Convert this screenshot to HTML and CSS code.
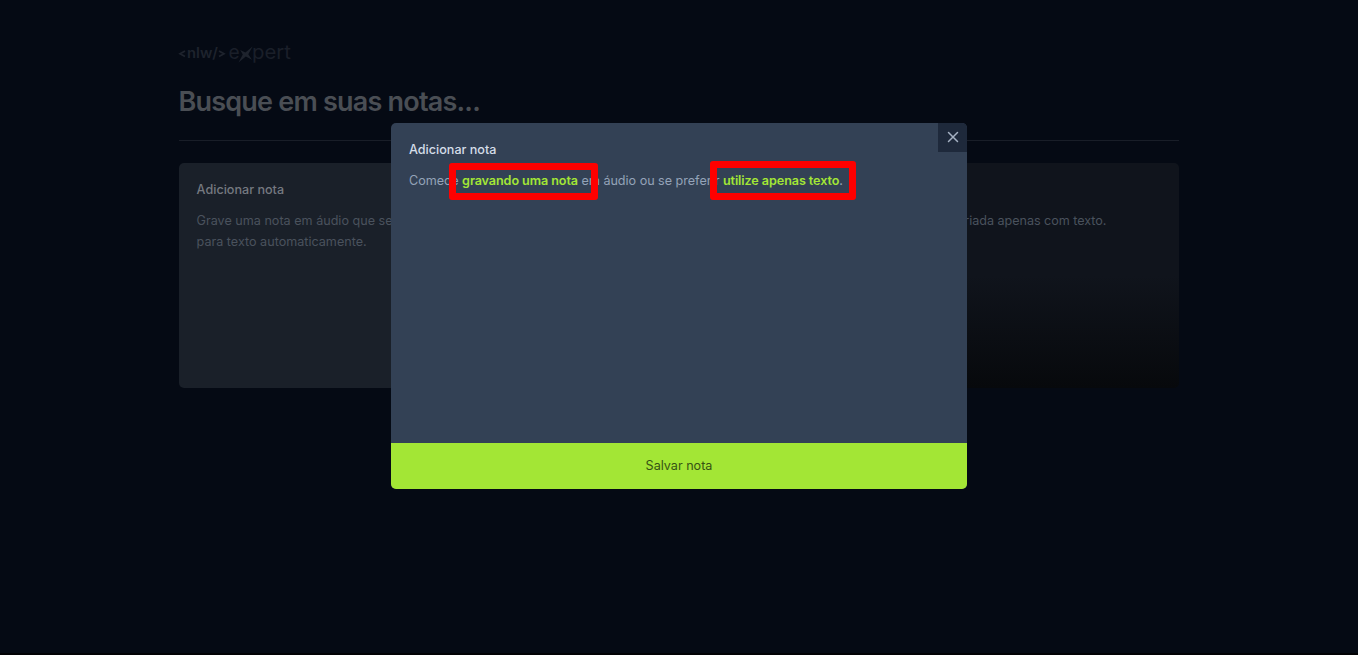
FILE: index.html
```html
<!DOCTYPE html>
<html lang="pt-BR">
<head>
<meta charset="utf-8">
<title>NLW Expert Notes</title>
<link rel="stylesheet" href="styles.css">
</head>
<body>
<main class="page">
  <svg class="logo" viewBox="0 0 114 24" width="114" height="24" aria-label="nlw expert">
    <g class="logo-tag">
      <path d="M6 9 1 11.8l5 2.8M40 9l5 2.8-5 2.8" class="logo-chevron"/>
      <text x="8" y="15.6" textLength="31" lengthAdjust="spacingAndGlyphs">nlw/</text>
    </g>
    <g class="logo-word">
      <text x="49.6" y="17.4" textLength="11.2" lengthAdjust="spacingAndGlyphs">e</text>
      <path class="logo-star" d="M61.2 8 66.4 10.6 73.6 4.5 69.3 12.2 73 17.8 66.8 14.4 59.5 20.4 63.8 12.6Z"/>
      <text x="73" y="17.4" textLength="39" lengthAdjust="spacingAndGlyphs">pert</text>
    </g>
  </svg>
  <h1 class="search">Busque em suas notas...</h1>
  <div class="divider"></div>
  <section class="grid">
    <article class="card card-new">
      <h2 class="card-title">Adicionar nota</h2>
      <p class="card-text">Grave uma nota em áudio que será convertida para texto automaticamente.</p>
    </article>
    <article class="card"></article>
    <article class="card">
      <h2 class="card-title">há 2 dias</h2>
      <p class="card-text card-text-tight">Essa nota foi criada apenas com texto.</p>
    </article>
  </section>
</main>
<div class="bottom-edge"></div>
<div class="dialog" role="dialog">
  <button class="close" aria-label="Fechar"><svg viewBox="0 0 24 24" width="18" height="18"><path d="M18 6 6 18M6 6l12 12"/></svg></button>
  <div class="dialog-body">
    <h2 class="dialog-title">Adicionar nota</h2>
    <p class="dialog-text">Comece <span class="link">gravando uma nota</span> em áudio ou se preferir <span class="link">utilize apenas texto</span>.</p>
  </div>
  <button class="save">Salvar nota</button>
</div>
<div class="marker marker-record"></div>
<div class="marker marker-text"></div>
</body>
</html>
```
FILE: styles.css
```css
* { box-sizing: border-box; margin: 0; }
body {
  height: 655px;
  overflow: hidden;
  background: #050a14;
  font-family: Inter, "Liberation Sans", sans-serif;
  font-size: 12.6px;
}
.page { width: 1000px; margin: 0 auto; padding-top: 42px; }
.logo { display: block; overflow: visible; }
.logo-tag text { font: 600 14.5px Inter, sans-serif; fill: #1e232d; }
.logo-word text { font: 400 19px Inter, sans-serif; fill: #1a1f29; }
.logo-chevron { fill: none; stroke: #1e232d; stroke-width: 1.7; }
.logo-star { fill: #1e232d; }
.search {
  margin-top: 18px;
  margin-left: -0.5px;
  font-size: 27px;
  font-weight: 600;
  line-height: 36px;
  letter-spacing: -0.79px;
  color: #4a4e54;
}
.divider { height: 1px; margin: 20px 0 22px; background: #191e28; }
.grid { display: grid; grid-template-columns: repeat(3, 1fr); gap: 21.6px; }
.card {
  height: 225px;
  padding: 18px;
  border-radius: 5px;
  background: linear-gradient(#10141c 50%, #07090c);
}
.card-new { padding-left: 17.6px; background: #1a2029; }
.card-title { font-size: 12.6px; font-weight: 500; line-height: 18px; color: #757980; }
.card-text { margin-top: 10.8px; line-height: 21.6px; color: #4a525d; }
.card-text-tight { letter-spacing: -0.04px; }
.bottom-edge { position: absolute; left: 0; right: 0; bottom: 0; height: 2px; background: #020204; }
.dialog {
  position: absolute;
  left: 391px;
  top: 123px;
  width: 576px;
  height: 366px;
  display: flex;
  flex-direction: column;
  overflow: hidden;
  border-radius: 5px;
  background: #334155;
}
.dialog-body { flex: 1; padding: 18px; }
.dialog-title { font-size: 12.6px; font-weight: 500; line-height: 18px; color: #d5dde8; }
.dialog-text { margin-top: 10.8px; line-height: 21.6px; letter-spacing: -0.02px; color: #94a3b8; }
.link { font-weight: 600; letter-spacing: -0.08px; color: #a3e635; }
.close {
  position: absolute;
  top: 0;
  right: 0;
  width: 29px;
  height: 29px;
  display: grid;
  place-items: center;
  padding: 0 0 2px;
  border: 0;
  background: #1e293b;
}
.close path { fill: none; stroke: #a5b1c3; stroke-width: 2; stroke-linecap: round; }
.save {
  height: 46px;
  padding: 0 0 2px;
  border: 0;
  background: #a3e635;
  color: #365314;
  font: 400 12.6px Inter, sans-serif;
}
.marker { position: absolute; border: 7px solid #f00; border-radius: 3px; }
.marker-record { left: 449px; top: 163px; width: 149px; height: 37px; }
.marker-text { left: 710px; top: 161px; width: 146px; height: 39px; }
```
